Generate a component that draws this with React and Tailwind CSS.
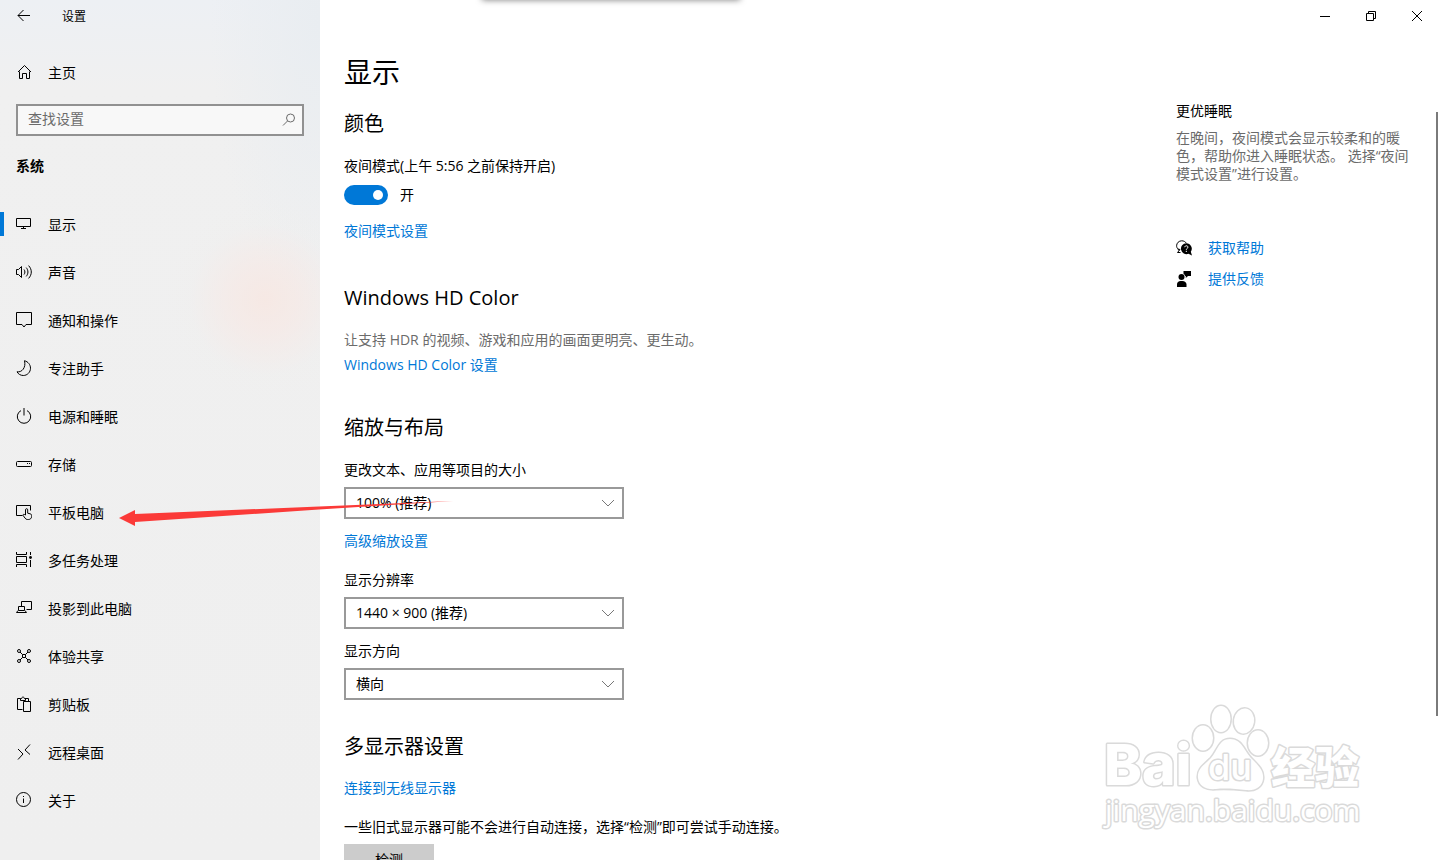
import { useState } from "react";

function Icon({ size = 16, children }) {
  return (
    <svg
      width={size}
      height={size}
      viewBox={`0 0 ${size} ${size}`}
      fill="none"
      stroke="currentColor"
      strokeWidth="1"
      className="shrink-0"
      aria-hidden="true"
    >
      {children}
    </svg>
  );
}

const icons = {
  display: <path d="M.5 2.500h14v8H.5zM7.500 10.500v2M5 12.500h5" />,
  sound: (
    <path d="M.5 5.500h2l3-3v11l-3-3h-2zM8 5.500c1.200 1.500 1.200 3.500 0 5M10.200 3.600c2.300 2.700 2.300 6.100 0 8.800M12.600 1.600c3.600 3.900 3.600 8.900 0 12.800" />
  ),
  notify: <path d="M.5.5h15v12H10L8 15l-2-2.500H.5z" />,
  moon: <path d="M8.500.7c3.600 1 6 4 6 7.500 0 4-3.200 7.300-7.200 7.300-2.700 0-5.100-1.400-6.300-3.700 4.800.8 9.200-4 7.500-11.100z" />,
  power: <path d="M8 0v7.500M5 2.600a6.700 6.700 0 1 0 6 0" />,
  storage: (
    <>
      <rect x=".5" y="5.500" width="15" height="5" rx="1" />
      <path d="M11 7.500h1M13 7.500h1" />
    </>
  ),
  tablet: (
    <>
      <path d="M6.500 11.500h-6v-10h14v5" />
      <path d="M9.500 11V5.800c0-1.500 2.200-1.500 2.200 0v3.400l2.500.6c.9.200 1.400.8 1.400 1.700v1c0 1.900-1.400 3-3.200 3h-.8c-1.100 0-1.900-.4-2.500-1.300L7.200 11.600c-.6-1 .7-1.900 1.500-1z" />
    </>
  ),
  multi: (
    <>
      <path d="M.5 0v2.500h10V0M.5 15v-2.500h10V15M.5 4.500h10v6H.5zM14.500 0v3M14.500 8v7" />
      <circle cx="14.500" cy="5.500" r="1.400" fill="currentColor" stroke="none" />
    </>
  ),
  project: <path d="M5.500 6V1.500h10v8h-5M2.500 6.500h6v4h-6zM2 10.500l-1.500 2h10l-1.500-2" />,
  share: (
    <>
      <circle cx="3" cy="3" r="1.500" />
      <circle cx="13" cy="3" r="1.500" />
      <circle cx="3" cy="13" r="1.500" />
      <circle cx="13" cy="13" r="1.500" />
      <path d="M4 4l2.500 2.500M12 4L9.500 6.500M4 12l2.500-2.500M12 12L9.500 9.500M6.500 6.500h3v3h-3z" />
    </>
  ),
  clipboard: <path d="M6.500 13.500h-5v-11h3M9 2.500h3.500v3M4.500 4.500v-2h1.200c.2-2 2.400-2 2.600 0h1.200v2zM7.500 5.500h7v10h-7z" />,
  remote: <path d="M2 5l5 5-5 5.500M14 .5L9 6l5 4.500" />,
  about: (
    <>
      <circle cx="7.500" cy="7.500" r="7" />
      <path d="M7.500 6.500v4.500M7.500 4v1" />
    </>
  ),
};

const navItems = [
  ["display", "显示"],
  ["sound", "声音"],
  ["notify", "通知和操作"],
  ["moon", "专注助手"],
  ["power", "电源和睡眠"],
  ["storage", "存储"],
  ["tablet", "平板电脑"],
  ["multi", "多任务处理"],
  ["project", "投影到此电脑"],
  ["share", "体验共享"],
  ["clipboard", "剪贴板"],
  ["remote", "远程桌面"],
  ["about", "关于"],
];

function Sidebar() {
  return (
    <aside className="flex w-80 shrink-0 flex-col bg-[#efefef] bg-[radial-gradient(circle_at_265px_300px,rgba(248,230,224,0.75)_0px,rgba(247,232,228,0.6)_35px,rgba(240,238,237,0.2)_75px,transparent_100px),radial-gradient(ellipse_at_320px_20px,#e9edf1_0px,transparent_110px),linear-gradient(#edf0f4,#f0f0f0_90px,#efefef)]">
      <div className="flex h-8 items-center gap-[30px] pl-4">
        <button type="button" aria-label="返回" className="flex">
          <Icon>
            <path d="M2 7.500h12M7.500 2l-5.500 5.500 5.500 5.500" />
          </Icon>
        </button>
        <span className="pt-0.5 text-xs leading-5">设置</span>
      </div>
      <a href="#home" className="mt-4 flex h-12 items-center gap-4 pl-4">
        <Icon>
          <path d="M3.500 7.500v7h3v-5h4v5h3v-7M2 8l6.500-6.500L15 8" />
        </Icon>
        <span className="pt-0.5">主页</span>
      </a>
      <label className="mx-4 mt-2 flex h-8 items-center border-2 border-[#919191] bg-[#f8f8f8] pr-1.5 pl-2.5">
        <input
          type="text"
          placeholder="查找设置"
          aria-label="查找设置"
          className="min-w-0 flex-1 bg-transparent pb-0.5 outline-none placeholder:text-[#6b6b6b]"
        />
        <span className="flex text-[#6b6b6b]">
          <Icon size={14}>
            <circle cx="8.500" cy="5" r="4" />
            <path d="M5.500 8L1 12.500" />
          </Icon>
        </span>
      </label>
      <h2 className="mt-5 px-4 font-bold">系统</h2>
      <nav className="mt-6 flex flex-col">
        {navItems.map(([id, label]) => (
          <a
            key={id}
            href={`#${id}`}
            className="flex h-12 items-center"
            aria-current={id === "display" ? "page" : undefined}
          >
            <span className={id === "display" ? "h-6 w-1 bg-[#0078d7]" : "h-6 w-1"} />
            <span className="flex items-center gap-4 pl-3">
              <Icon>{icons[id]}</Icon>
              <span className="pt-0.5">{label}</span>
            </span>
          </a>
        ))}
      </nav>
    </aside>
  );
}

function Heading({ children }) {
  return <h2 className="text-xl leading-7">{children}</h2>;
}

function TextLink({ children }) {
  return (
    <a href="#more" className="self-start text-[#0078d7]">
      {children}
    </a>
  );
}

function SelectField({ id, label, options }) {
  return (
    <div className="flex flex-col gap-[7px]">
      <label htmlFor={id} className="self-start">
        {label}
      </label>
      <div className="relative w-full max-w-70">
        <select
          id={id}
          className="block h-8 w-full appearance-none border-2 border-[#999] bg-white px-2.5 leading-5 outline-none"
        >
          {options.map((o) => (
            <option key={o}>{o}</option>
          ))}
        </select>
        <span className="pointer-events-none absolute inset-y-0 right-2 flex items-center text-[#777]">
          <Icon>
            <path d="M2 5l6 6 6-6" />
          </Icon>
        </span>
      </div>
    </div>
  );
}

function WindowControls() {
  return (
    <div className="flex h-8 justify-end">
      <button type="button" aria-label="最小化" className="flex w-[46px] items-center justify-center">
        <Icon size={10}>
          <path d="M0 5.500h10" />
        </Icon>
      </button>
      <button type="button" aria-label="还原" className="flex w-[46px] items-center justify-center">
        <Icon size={10}>
          <path d="M.5 2.500h7v7h-7zM2.500 2.500v-2h7v7h-2" />
        </Icon>
      </button>
      <button type="button" aria-label="关闭" className="flex w-[46px] items-center justify-center">
        <Icon size={10}>
          <path d="M0 0l10 10M10 0L0 10" />
        </Icon>
      </button>
    </div>
  );
}

function HelpPanel() {
  return (
    <aside className="mt-[69px] mr-6 w-60 shrink-0">
      <h3>更优睡眠</h3>
      <p className="mt-2 leading-[18px] text-[#6b6b6b]">
        在晚间，夜间模式会显示较柔和的暖色，帮助你进入睡眠状态。 选择“夜间模式设置”进行设置。
      </p>
      <div className="mt-[55px] flex flex-col gap-[11px]">
        <a href="#help" className="flex items-center gap-4">
          <Icon>
            <path d="M4 9.500L1.500 12.500h3M4 9.500L2 9C1 8 .6 7 .6 5.800.6 3 2.900.8 5.700.8c2 0 3.800.9 4.600 2.400M2 9l.8 1.500" />
            <path
              d="M10.300 3.200a5.500 5.500 0 1 0 2.200 10.600L16 15.500l-1.200-3.700a5.500 5.500 0 0 0-4.500-8.600z"
              fill="currentColor"
              stroke="none"
            />
            <path d="M8.700 7.200c.2-2 3.500-1.800 3.200.1-.2 1.100-1.600 1.200-1.600 2.500M10.300 10.800v1.200" stroke="#fff" />
          </Icon>
          <span className="text-[#0078d7]">获取帮助</span>
        </a>
        <a href="#feedback" className="flex items-center gap-4">
          <Icon>
            <g fill="currentColor" stroke="none">
              <circle cx="5.500" cy="6" r="3" />
              <path d="M1 16v-2.500C1 11.500 2.500 10 4.500 10h2c2 0 4 1.500 4 3.500V16z" />
              <path d="M7.500 0H15v5h-3l-2.200 2V5H9.200A4 4 0 0 0 7.500 2.700z" />
            </g>
          </Icon>
          <span className="text-[#0078d7]">提供反馈</span>
        </a>
      </div>
    </aside>
  );
}

function Watermark() {
  return (
    <svg
      width="270"
      height="130"
      viewBox="0 0 270 130"
      className="pointer-events-none absolute right-[70px] bottom-[26px]"
      fill="#fff"
      stroke="#dadada"
      strokeWidth="3"
      strokeLinejoin="round"
      paintOrder="stroke"
      aria-hidden="true"
    >
      <text x="4" y="81" fontFamily="Inter, sans-serif" fontWeight="800" fontSize="57">
        Bai
      </text>
      <ellipse cx="103" cy="34" rx="10" ry="12.500" />
      <ellipse cx="121" cy="15" rx="9.500" ry="13" />
      <ellipse cx="144" cy="17" rx="10" ry="12.500" transform="rotate(8 144 17)" />
      <ellipse cx="158" cy="39" rx="10" ry="12.500" />
      <path d="M130 35c12 0 14 12 22 20 7 7 12 12 11 20-1 8-8 12-17 11-10-1-20-2-30-1-10 1-17-3-18-11-1-9 6-13 13-20 7-8 8-19 19-19z" />
      <text x="108" y="76" fontFamily="Inter, sans-serif" fontWeight="500" fontSize="36">
        du
      </text>
      <text x="171" y="80" fontFamily="'Noto Sans CJK SC', sans-serif" fontWeight="900" fontSize="44">
        经验
      </text>
      <text x="5" y="117" fontFamily="'Open Sans', sans-serif" fontSize="30">
        jingyan.baidu.com
      </text>
    </svg>
  );
}

export default function App() {
  const [night, setNight] = useState(true);
  return (
    <div className="relative flex h-screen overflow-hidden bg-white font-['Open_Sans','Noto_Sans_CJK_SC',sans-serif] text-sm leading-5 text-black">
      <Sidebar />
      <div className="flex min-w-0 flex-1 flex-col">
        <WindowControls />
        <div className="flex min-h-0 flex-1 justify-between">
          <main className="flex min-w-0 flex-1 flex-col px-6 pt-5">
            <h1 className="text-[28px] leading-10">显示</h1>

            <section className="mt-[18px] flex flex-col">
              <Heading>颜色</Heading>
              <label htmlFor="night" className="mt-[18px] self-start">
                夜间模式(上午 5:56 之前保持开启)
              </label>
              <div className="mt-[9px] flex h-5 items-center gap-3">
                <input
                  id="night"
                  type="checkbox"
                  role="switch"
                  checked={night}
                  onChange={(e) => setNight(e.target.checked)}
                  className="flex h-5 w-11 appearance-none items-center rounded-full bg-[#767676] px-[5px] before:block before:size-2.5 before:rounded-full before:bg-white checked:justify-end checked:bg-[#0078d7]"
                />
                <span>{night ? "开" : "关"}</span>
              </div>
              <div className="mt-4 flex">
                <TextLink>夜间模式设置</TextLink>
              </div>
            </section>

            <section className="mt-[43px] flex flex-col">
              <Heading>Windows HD Color</Heading>
              <p className="mt-[18px] text-[#6b6b6b]">让支持 HDR 的视频、游戏和应用的画面更明亮、更生动。</p>
              <div className="mt-[5px] flex">
                <TextLink>Windows HD Color 设置</TextLink>
              </div>
            </section>

            <section className="mt-[39px] flex flex-col">
              <Heading>缩放与布局</Heading>
              <div className="mt-[18px]">
                <SelectField
                  id="scale"
                  label="更改文本、应用等项目的大小"
                  options={["100% (推荐)", "125%", "150%"]}
                />
              </div>
              <div className="mt-3 mb-[19px] flex">
                <TextLink>高级缩放设置</TextLink>
              </div>
              <div className="flex flex-col gap-3">
                <SelectField id="resolution" label="显示分辨率" options={["1440 × 900 (推荐)", "1280 × 720"]} />
                <SelectField id="orientation" label="显示方向" options={["横向", "纵向"]} />
              </div>
            </section>

            <section className="mt-[33px] flex flex-col">
              <Heading>多显示器设置</Heading>
              <div className="mt-[17px] flex">
                <TextLink>连接到无线显示器</TextLink>
              </div>
              <p className="mt-[19px]">一些旧式显示器可能不会进行自动连接，选择“检测”即可尝试手动连接。</p>
              <button type="button" className="mt-[7px] h-8 w-[90px] self-start bg-[#ccc]">
                检测
              </button>
            </section>
          </main>
          <HelpPanel />
        </div>
      </div>

      <div className="absolute top-28 right-0.5 h-[604px] w-0.5 bg-[#7a7a7a]" />
      <div className="absolute -top-4 left-[482px] h-4 w-[258px] shadow-[0_0_6px_rgba(0,0,0,0.5)]" />
      <svg
        width="336"
        height="28"
        viewBox="0 0 336 28"
        className="pointer-events-none absolute top-[499px] left-[119px]"
        aria-hidden="true"
      >
        <path d="M0 19L16 11v4L200 7.500 334 2 200 10.500 16 23v4z" fill="#fb3a38" />
      </svg>
      <Watermark />
    </div>
  );
}
